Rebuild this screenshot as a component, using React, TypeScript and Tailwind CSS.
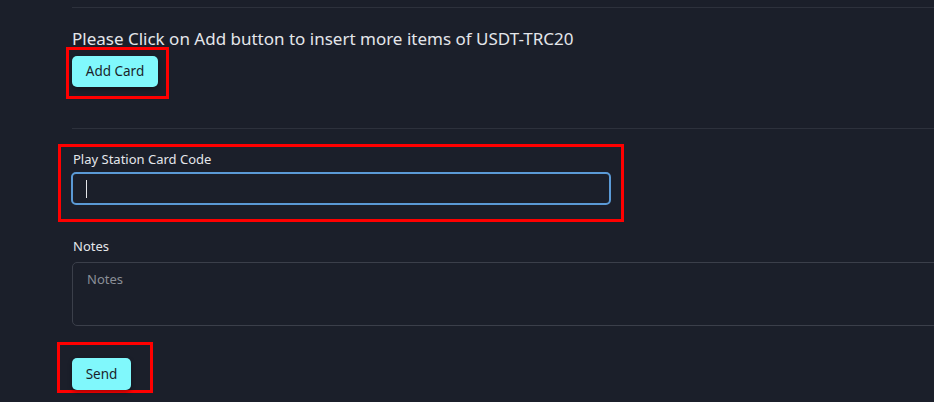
export default function App() {
  return (
    <div className="min-h-screen w-full overflow-hidden bg-[#1b1f2a] pl-[72px] font-['Noto_Sans',sans-serif]">
      <div className="w-[900px] pt-[7px]">
        <div className="border-t border-[#2d313c]" />

        <p className="mt-[19px] text-[17px] leading-6 text-[#e4e6ea]">
          Please Click on Add button to insert more items of USDT-TRC20
        </p>
        <div className="-ml-[6px] mt-[-4px] w-[103px] border-[3px] border-[#ff0000] pb-[9px] pl-[3px] pt-[6px]">
          <button className="h-[31px] w-[86px] rounded-[5px] bg-[#80f8fc] text-[13.5px] font-normal text-[#1b1f2a] shadow-[0_2px_4px_rgba(0,0,0,0.35)]">
            Add Card
          </button>
        </div>

        <div className="mt-[29px] border-t border-[#2d313c]" />

        <div className="-ml-[14px] mt-[15px] w-[566px] border-[3px] border-[#ff0000] px-[10px] pb-[14px] pt-[4px]">
          <label className="block pl-[2px] text-[13px] leading-4 text-[#e4e6ea]">Play Station Card Code</label>
          <div className="mt-[5px] flex h-[33px] items-center rounded-[5px] border-2 border-[#5b9ad6] px-[13px]">
            <span className="h-[18px] w-px bg-[#e4e6ea]" />
          </div>
        </div>

        <label className="mt-[16px] block pl-[1px] text-[13px] leading-4 text-[#e4e6ea]">Notes</label>
        <textarea
          placeholder="Notes"
          className="mt-[8px] block h-[64px] w-full resize-none rounded-[5px] border border-[#3b3f4a] bg-transparent px-[14px] pt-[7px] text-[13px] text-[#e4e6ea] outline-none placeholder:text-[#8a8e97]"
        />

        <div className="-ml-[15px] mt-[16px] w-[96px] border-[3px] border-[#ff0000] pl-[12px] pt-[13px]">
          <button className="h-[32px] w-[59px] rounded-[5px] bg-[#80f8fc] text-[13.5px] font-normal text-[#1b1f2a] shadow-[0_2px_4px_rgba(0,0,0,0.35)]">
            Send
          </button>
        </div>
      </div>
    </div>
  );
}
